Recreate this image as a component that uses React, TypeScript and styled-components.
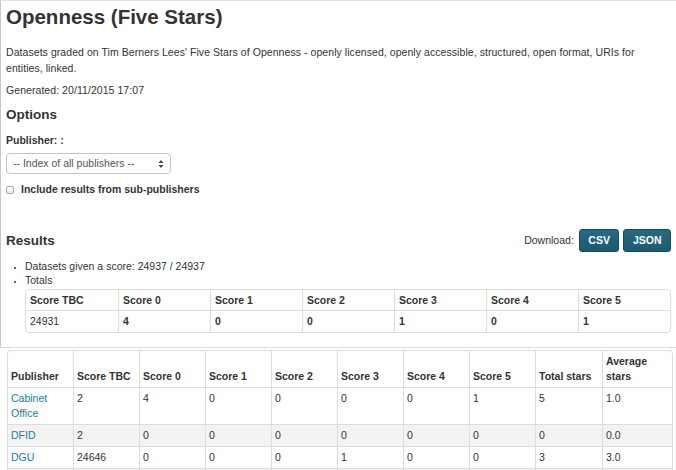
import React from "react";
import styled, { createGlobalStyle } from "styled-components";

const GlobalStyle = createGlobalStyle`
  html, body { margin: 0; padding: 0; background: #fff; }
  body {
    font-family: "Liberation Sans", Arial, Helvetica, sans-serif;
    font-size: 10.5px;
    line-height: 15px;
    color: #333;
  }
  * { box-sizing: border-box; }
`;

const Panel = styled.div`
  border-left: 1px solid #c8c8c8;
  border-top: 1px solid #e2e2e2;
  border-bottom: 1px solid #dddddd;
  padding: 0 5px 14px 5px;
`;

const Title = styled.h1`
  margin: 0;
  padding-top: 2px;
  font-size: 20.5px;
  line-height: 27px;
  font-weight: bold;
  color: #333;
`;

const Para = styled.p<{ $top?: number }>`
  margin: ${(p) => p.$top ?? 0}px 0 0 0;
  line-height: 16px;
  letter-spacing: 0.06px;
`;

const SubHead = styled.h3<{ $top: number }>`
  margin: ${(p) => p.$top}px 0 0 0;
  font-size: 13.5px;
  line-height: 18px;
  font-weight: bold;
`;

const Label = styled.div`
  margin-top: 9px;
  font-weight: bold;
`;

const SelectBox = styled.div`
  margin-top: 5px;
  width: 165px;
  height: 21px;
  border: 1px solid #c6c6c6;
  border-radius: 4px;
  display: flex;
  align-items: center;
  justify-content: space-between;
  padding: 0 6px 0 6px;
  color: #555;
`;

const CheckRow = styled.label`
  margin-top: 8px;
  display: flex;
  align-items: center;
  gap: 7px;
  font-weight: bold;
`;

const Check = styled.span`
  display: inline-block;
  width: 8px;
  height: 8px;
  border: 1px solid #aaa;
  border-radius: 2px;
  background: linear-gradient(#fff, #e8e8e8);
`;

const ResultsBar = styled.div`
  margin-top: 32px;
  display: flex;
  justify-content: space-between;
  align-items: center;
`;

const Downloads = styled.div`
  display: flex;
  align-items: center;
  gap: 4px;
`;

const DownloadLabel = styled.span`
  margin-right: 1px;
`;

const Btn = styled.span`
  display: inline-flex;
  align-items: center;
  justify-content: center;
  height: 23px;
  padding: 0 8.5px;
  background: linear-gradient(#266a82, #1d5a70);
  border: 1px solid #174b5e;
  border-radius: 3px;
  color: #fff;
  font-weight: bold;
  font-size: 10.5px;
`;

const List = styled.ul`
  margin: 7px 0 0 0;
  padding-left: 19px;
  list-style: disc;
  line-height: 14px;
  li::marker { font-size: 8px; }
`;

const Table = styled.table`
  width: 100%;
  border-collapse: separate;
  border-spacing: 0;
  border: 1px solid #dddddd;
  border-radius: 4px;
  table-layout: fixed;
`;

const TotalsTable = styled(Table)`
  margin-top: 2px;
`;

const Th = styled.th`
  text-align: left;
  font-weight: bold;
  padding: 3px 4px 2px 4px;
  line-height: 15px;
  vertical-align: bottom;
  border-left: 1px solid #dddddd;
  &:first-child { border-left: none; }
`;

const Td = styled.td<{ $bold?: boolean }>`
  padding: 3px 4px 3px 4px;
  line-height: 15px;
  vertical-align: top;
  border-left: 1px solid #dddddd;
  border-top: 1px solid #dddddd;
  font-weight: ${(p) => (p.$bold ? "bold" : "normal")};
  &:first-child { border-left: none; }
`;

const Row = styled.tr<{ $striped?: boolean }>`
  background: ${(p) => (p.$striped ? "#f3f3f3" : "transparent")};
`;

const BigWrap = styled.div`
  padding: 2px 5px 0 7px;
`;

const BigTh = styled(Th)`
  padding: 3px 3px 3px 3px;
`;

const BigTd = styled(Td)`
  padding: 3px 3px 3px 3px;
  height: 22px;
`;

const Link = styled.a`
  color: #1d7ca6;
  text-decoration: none;
`;

const Arrows = () => (
  <svg width="6" height="10" viewBox="0 0 6 10">
    <path d="M3 1 L5.5 4 H0.5 Z" fill="#444" />
    <path d="M3 9 L5.5 6 H0.5 Z" fill="#444" />
  </svg>
);

const totals = ["24931", "4", "0", "0", "1", "0", "1"];
const totalHeads = ["Score TBC", "Score 0", "Score 1", "Score 2", "Score 3", "Score 4", "Score 5"];

const rows = [
  { name: "Cabinet Office", v: ["2", "4", "0", "0", "0", "0", "1", "5", "1.0"] },
  { name: "DFID", v: ["2", "0", "0", "0", "0", "0", "0", "0", "0.0"] },
  { name: "DGU", v: ["24646", "0", "0", "0", "1", "0", "0", "3", "3.0"] },
  { name: "", v: ["", "", "", "", "", "", "", "", ""] },
];

const bigHeads = ["Publisher", "Score TBC", "Score 0", "Score 1", "Score 2", "Score 3", "Score 4", "Score 5", "Total stars", "Average stars"];
const bigWidths = [65, 66, 66, 66, 66, 66, 66, 66, 67, 70];

export default function App() {
  return (
    <>
      <GlobalStyle />
      <Panel>
        <Title>Openness (Five Stars)</Title>
        <Para $top={14}>
          Datasets graded on Tim Berners Lees' Five Stars of Openness - openly licensed, openly accessible, structured, open format, URIs for entities, linked.
        </Para>
        <Para $top={6}>Generated: 20/11/2015 17:07</Para>
        <SubHead $top={8}>Options</SubHead>
        <Label>Publisher: :</Label>
        <SelectBox>
          <span>-- Index of all publishers --</span>
          <Arrows />
        </SelectBox>
        <CheckRow>
          <Check />
          Include results from sub-publishers
        </CheckRow>
        <ResultsBar>
          <SubHead $top={0}>Results</SubHead>
          <Downloads>
            <DownloadLabel>Download:</DownloadLabel>
            <Btn>CSV</Btn>
            <Btn>JSON</Btn>
          </Downloads>
        </ResultsBar>
        <List>
          <li>Datasets given a score: 24937 / 24937</li>
          <li>
            Totals
            <TotalsTable>
              <thead>
                <tr>
                  {totalHeads.map((h) => (
                    <Th key={h}>{h}</Th>
                  ))}
                </tr>
              </thead>
              <tbody>
                <tr>
                  {totals.map((t, i) => (
                    <Td key={i} $bold={i > 0}>
                      {t}
                    </Td>
                  ))}
                </tr>
              </tbody>
            </TotalsTable>
          </li>
        </List>
      </Panel>
      <BigWrap>
        <Table>
          <colgroup>
            {bigWidths.map((w, i) => (
              <col key={i} style={{ width: w }} />
            ))}
          </colgroup>
          <thead>
            <tr>
              {bigHeads.map((h) => (
                <BigTh key={h}>{h}</BigTh>
              ))}
            </tr>
          </thead>
          <tbody>
            {rows.map((r, ri) => (
              <Row key={ri} $striped={ri % 2 === 1}>
                <BigTd>
                  <Link href="#">{r.name}</Link>
                </BigTd>
                {r.v.map((c, i) => (
                  <BigTd key={i}>{c}</BigTd>
                ))}
              </Row>
            ))}
          </tbody>
        </Table>
      </BigWrap>
    </>
  );
}
